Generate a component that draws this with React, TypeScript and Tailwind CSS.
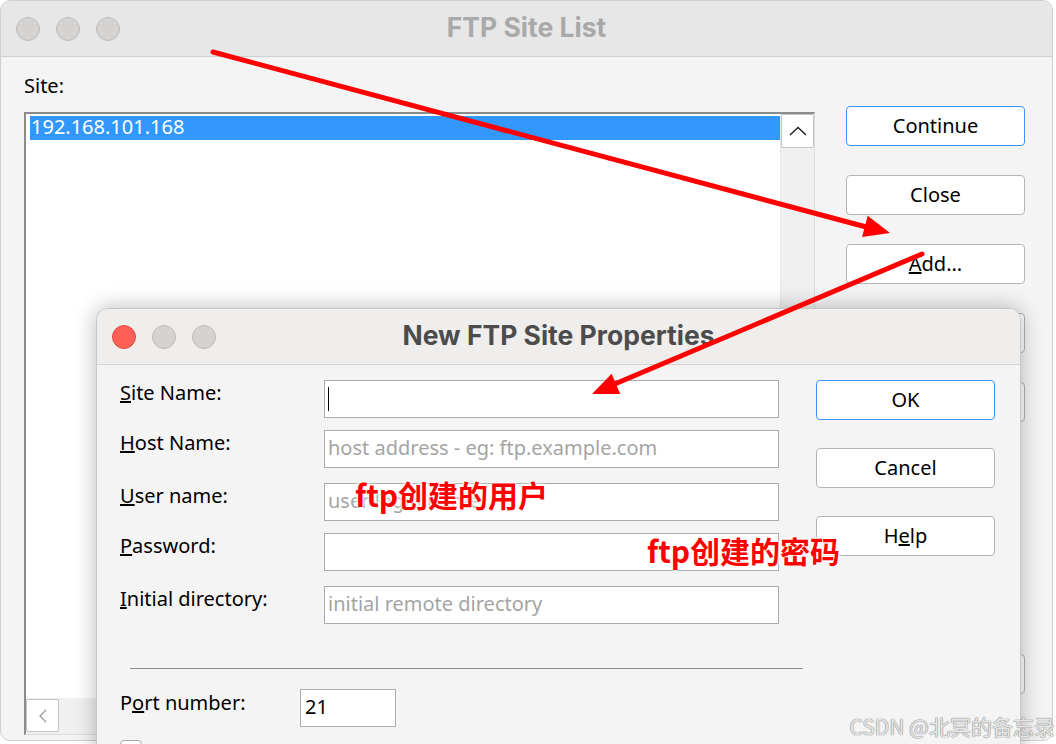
import React from "react";

const ui = "font-['Noto_Sans',_'Open_Sans',_sans-serif]";

const TrafficLight = ({ color }: { color: "red" | "gray" }) => (
  <span
    className={
      color === "red"
        ? "block h-[24px] w-[24px] rounded-full bg-[#fe5f57] border border-[#e24c44]"
        : "block h-[24px] w-[24px] rounded-full bg-[#d4d3d1] border border-[#bdbcba]"
    }
  />
);

const Btn = ({ children, focus = false }: { children: React.ReactNode; focus?: boolean }) => (
  <div
    className={`flex h-[40px] w-[179px] items-center justify-center rounded-[4px] bg-white text-[20px] text-black ${
      focus ? "border border-[#3d93f5]" : "border border-[#b4b4b4]"
    }`}
  >
    {children}
  </div>
);

const Field = ({ value, placeholder, caret = false }: { value?: string; placeholder?: string; caret?: boolean }) => (
  <div className="flex h-[38px] w-[455px] items-center border border-[#ababab] bg-white px-[3px] pb-[3px] text-[20px]">
    {caret && <span className="mt-[3px] h-[24px] w-[1px] bg-black" />}
    {value && <span className="text-black">{value}</span>}
    {placeholder && <span className="text-[#a4a4a4]">{placeholder}</span>}
  </div>
);

// arrow head helper: tip + direction
function head(x1: number, y1: number, x2: number, y2: number, len = 26, w = 22) {
  const dx = x2 - x1;
  const dy = y2 - y1;
  const d = Math.hypot(dx, dy);
  const ux = dx / d;
  const uy = dy / d;
  const bx = x2 - ux * len;
  const by = y2 - uy * len;
  const px = -uy * (w / 2);
  const py = ux * (w / 2);
  return `${x2},${y2} ${bx + px},${by + py} ${bx - px},${by - py}`;
}

export default function App() {
  return (
    <div className={`relative h-[744px] w-[1056px] overflow-hidden bg-white ${ui}`}>
      {/* background window */}
      <div className="flex h-[741px] w-[1053px] flex-col overflow-hidden rounded-[10px] border border-[#d0d0d0] bg-[#f4f4f4]">
        <div className="relative flex h-[56px] shrink-0 items-center border-b border-[#cfcfcf] bg-[#e7e7e7] px-[15px]">
          <div className="flex gap-[16px]">
            <TrafficLight color="gray" />
            <TrafficLight color="gray" />
            <TrafficLight color="gray" />
          </div>
          <div className="absolute inset-x-0 top-[7px] text-center font-['Inter',_sans-serif] text-[26.5px] font-bold text-[#a9a9a9]">
            FTP Site List
          </div>
        </div>
        <div className="flex min-h-0 flex-1 gap-[31px] px-[23px]">
          <div className="flex flex-col pt-[17px]">
            <div className="text-[20px] leading-[24px] text-black">Site:</div>
            <div className="mt-[14px] flex h-[623px] w-[791px] border-l-2 border-t-2 border-[#8c8c8c] border-r border-b border-r-[#dcdcdc] border-b-[#dcdcdc] bg-white">
              <div className="flex flex-1 flex-col">
                <div className="flex-1 pl-[4px] pt-[2px]">
                  <div className="h-[24px] bg-[#3398fd] pl-[1px] text-[20px] leading-[22px] text-white">192.168.101.168</div>
                </div>
                <div className="flex h-[36px] items-start bg-[#f0f0f0] pt-[1px]">
                  <div className="flex h-[33px] w-[33px] items-center justify-center rounded-[2px] border border-[#c4c4c4] bg-white">
                    <svg width="10" height="16" viewBox="0 0 10 16" fill="none" stroke="#9a9a9a" strokeWidth="1.3">
                      <polyline points="8,2 2,8 8,14" />
                    </svg>
                  </div>
                </div>
              </div>
              <div className="w-[34px] border-l border-[#e6e6e6] bg-[#f0f0f0]">
                <div className="flex h-[34px] w-[33px] items-center justify-center rounded-[2px] border border-[#c4c4c4] bg-white">
                  <svg width="18" height="10" viewBox="0 0 18 10" fill="none" stroke="#222" strokeWidth="1.5">
                    <polyline points="1,9 9,1.5 17,9" />
                  </svg>
                </div>
              </div>
            </div>
          </div>
          <div className="flex flex-col gap-[29px] pt-[49px]">
            <Btn focus>Continue</Btn>
            <Btn>Close</Btn>
            <Btn>
              <span className="underline">A</span>dd...
            </Btn>
            <Btn>Remove</Btn>
            <Btn>Edit</Btn>
            <div className="mt-[203px]">
              <Btn>Sort</Btn>
            </div>
          </div>
        </div>
      </div>

      {/* dialog window */}
      <div className="absolute left-[96px] top-[308px] flex h-[460px] w-[925px] flex-col overflow-hidden rounded-t-[12px] border border-[#c8c8c8] bg-[#f4f4f4] shadow-[0_0_22px_rgba(0,0,0,0.28)]">
        <div className="relative flex h-[56px] shrink-0 items-center border-b border-[#d4d4d2] bg-[#efeeec] px-[15px]">
          <div className="flex gap-[16px]">
            <TrafficLight color="red" />
            <TrafficLight color="gray" />
            <TrafficLight color="gray" />
          </div>
          <div className="absolute inset-x-0 top-[7px] text-center font-['Inter',_sans-serif] text-[26.5px] font-bold text-[#4c4c4c]">
            New FTP Site Properties
          </div>
        </div>
        <div className="flex px-[23px]">
          <div className="flex w-[659px] shrink-0 flex-col pt-[15px]">
            {[
              { label: ["S", "ite Name:"], el: <Field caret />, mt: "" },
              { label: ["H", "ost Name:"], el: <Field placeholder="host address - eg: ftp.example.com" />, mt: "mt-[12px]" },
              { label: ["U", "ser name:"], el: <Field placeholder="user login name" />, mt: "mt-[15px]" },
              { label: ["P", "assword:"], el: <Field />, mt: "mt-[12px]" },
              { label: ["I", "nitial directory:"], el: <Field placeholder="initial remote directory" />, mt: "mt-[15px]" },
            ].map((r, i) => (
              <div key={i} className={`flex items-start ${r.mt}`}>
                <div className="w-[204px] shrink-0 pt-[1px] text-[20px] leading-[24px] text-black">
                  <span className="underline">{r.label[0]}</span>
                  {r.label[1]}
                </div>
                {r.el}
              </div>
            ))}
            <div className="ml-[10px] mt-[44px] h-[1px] w-[673px] shrink-0 bg-[#8e8e8e]" />
            <div className="mt-[20px] flex items-start">
              <div className="w-[180px] pt-[2px] text-[20px] leading-[24px] text-black">
                P<span className="underline">o</span>rt number:
              </div>
              <div className="flex h-[38px] w-[96px] items-center border border-[#ababab] bg-white px-[4px] pb-[2px] text-[20px] text-black">
                21
              </div>
            </div>
            <div className="mt-[13px] h-[22px] w-[22px] rounded-[4px] border border-[#a8a8a8] bg-white" />
          </div>
          <div className="ml-[37px] flex flex-col gap-[28px] pt-[15px]">
            <Btn focus>OK</Btn>
            <Btn>Cancel</Btn>
            <Btn>
              H<span className="underline">e</span>lp
            </Btn>
          </div>
        </div>
      </div>

      {/* annotations */}
      <div className="absolute left-[355px] top-[475px] font-['Noto_Sans_CJK_SC',_sans-serif] text-[30px] font-bold leading-[38px] text-[#ff0000] [text-shadow:0_0_3px_#fff,0_0_3px_#fff,0_0_5px_#fff]">
        ftp创建的用户
      </div>
      <div className="absolute left-[647px] top-[531px] font-['Noto_Sans_CJK_SC',_sans-serif] text-[30px] font-bold leading-[38px] text-[#ff0000] [text-shadow:0_0_3px_#fff,0_0_3px_#fff,0_0_5px_#fff]">
        ftp创建的密码
      </div>

      <svg className="pointer-events-none absolute inset-0" width="1056" height="744">
        <line x1="213" y1="52" x2="870" y2="228" stroke="#ff0000" strokeWidth="5" strokeLinecap="round" />
        <polygon points={head(213, 52, 890, 233)} fill="#ff0000" />
        <line x1="922" y1="254" x2="610" y2="386" stroke="#ff0000" strokeWidth="5" strokeLinecap="round" />
        <polygon points={head(922, 254, 592, 394)} fill="#ff0000" />
      </svg>

      <div className="absolute right-[1px] top-[711px] font-['Noto_Sans_CJK_SC',_sans-serif] text-[21px] leading-[30px] text-[#e6e6e6] [text-shadow:0_0_1px_#7a7a7a,0_0_1px_#7a7a7a]">
        CSDN @北冥的备忘录
      </div>
    </div>
  );
}
